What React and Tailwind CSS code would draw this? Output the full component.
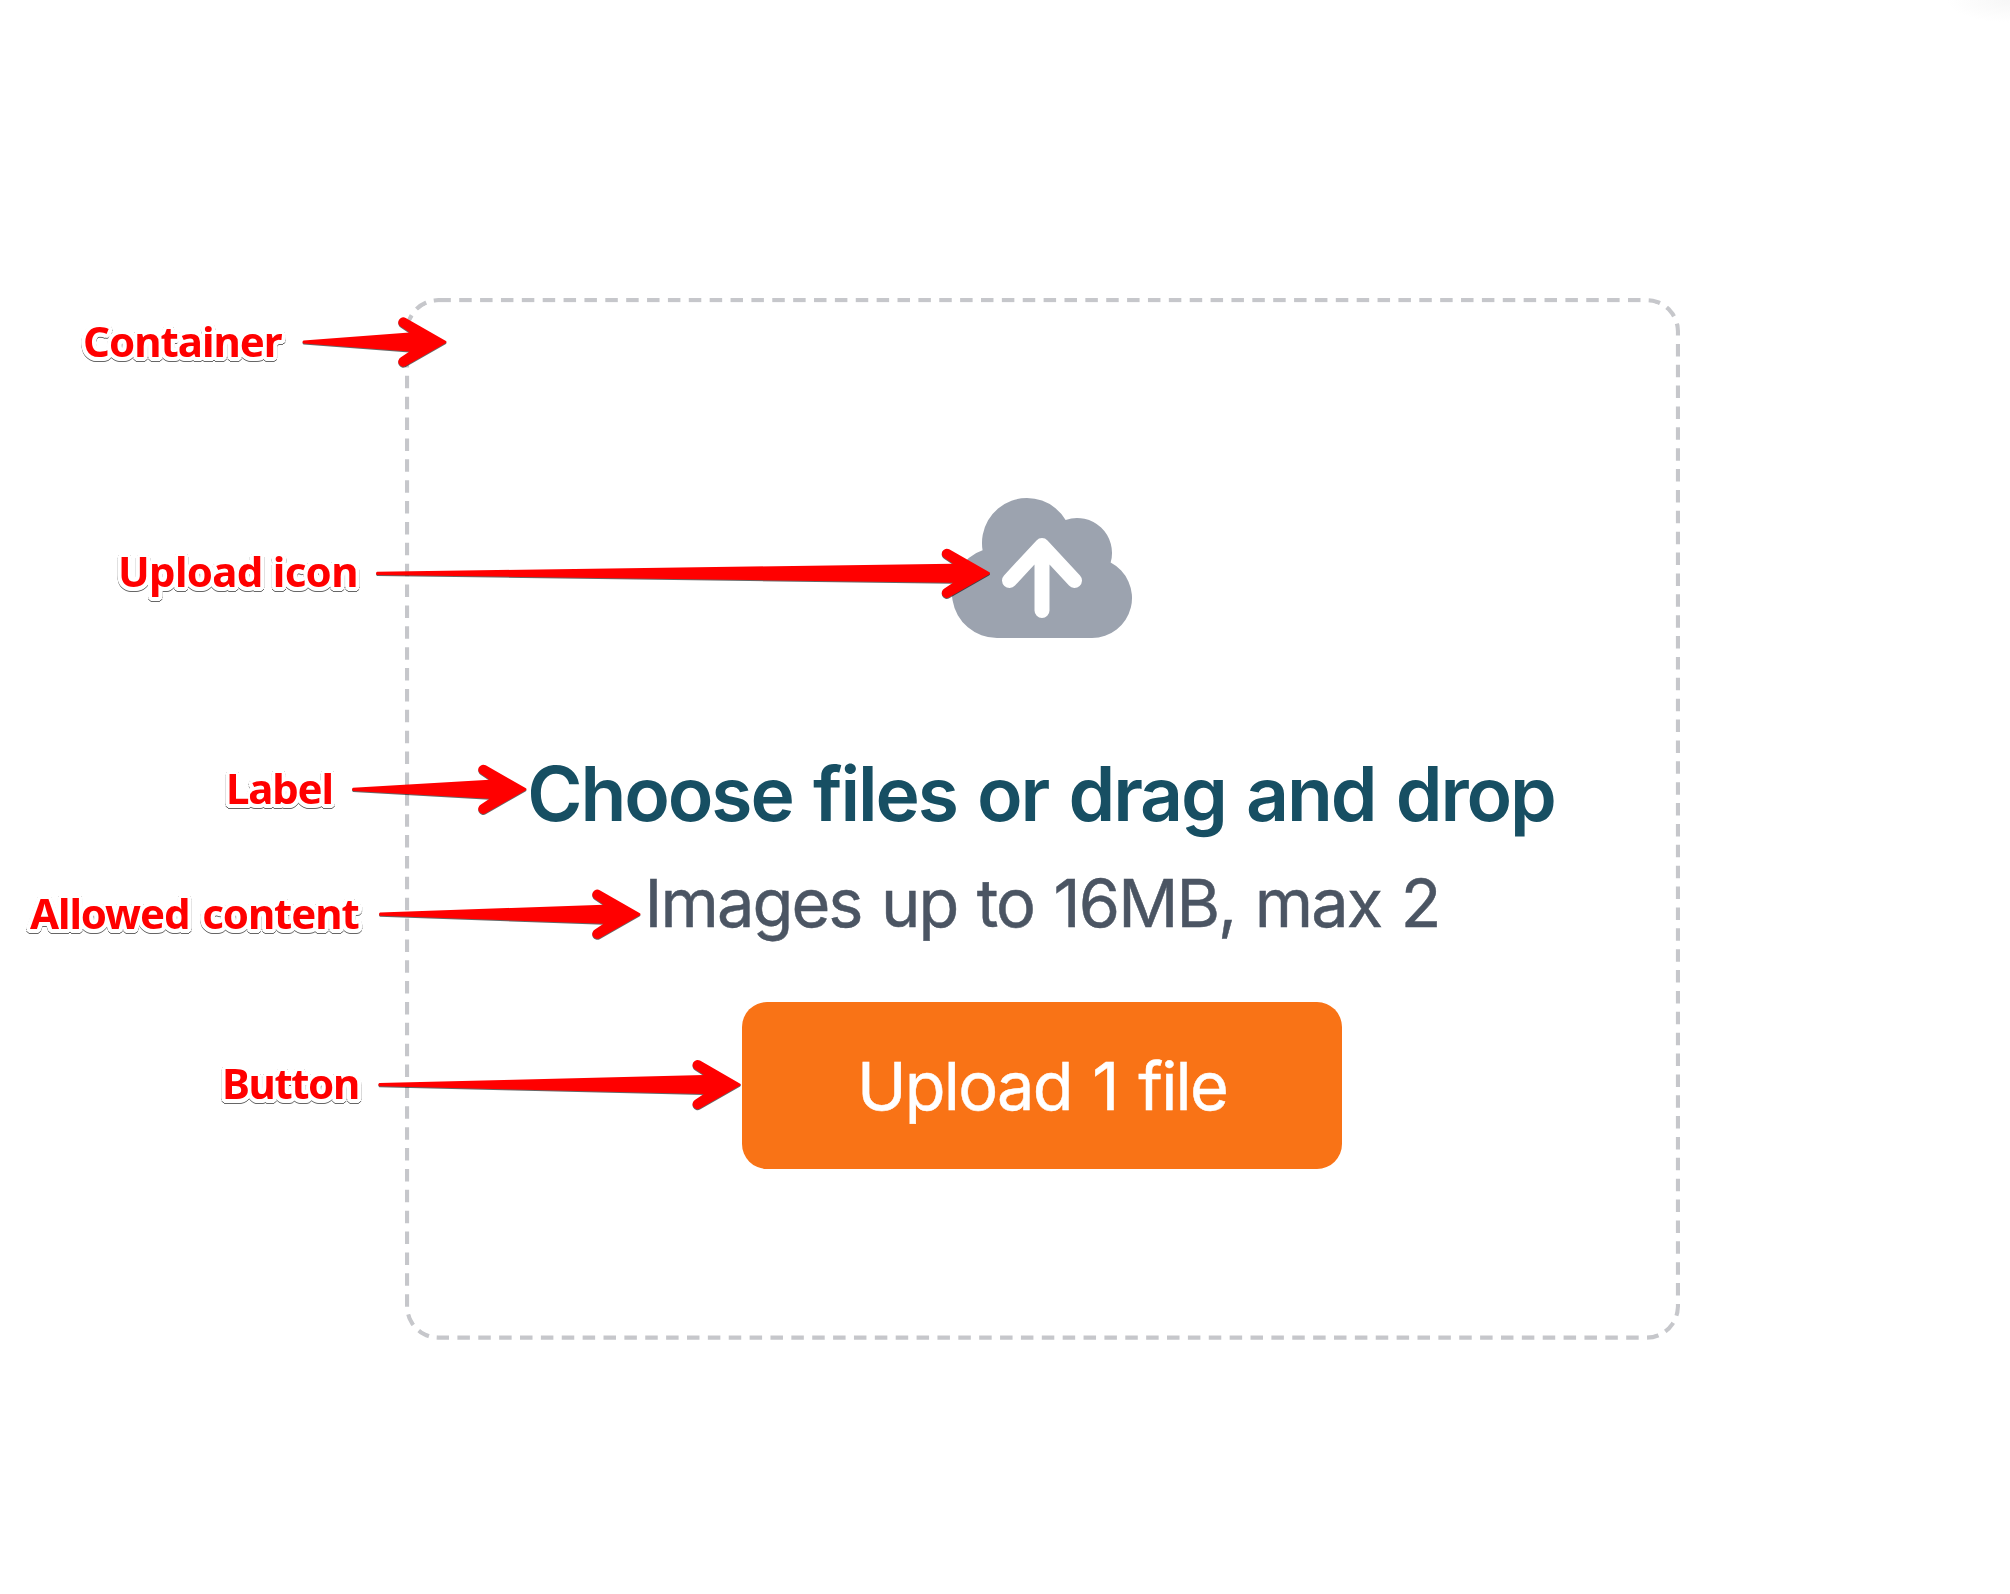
const annotations = [
  { text: "Container", box: "left-[83px] top-[311px] tracking-[-1px]", tail: 302.5, tip: 446.5, y: 342 },
  { text: "Upload icon", box: "left-[118px] top-[541px] tracking-[-0.7px]", tail: 376, tip: 990, y: 573.3 },
  { text: "Label", box: "left-[226px] top-[758px] tracking-[-1.2px]", tail: 352, tip: 526.5, y: 789.3 },
  { text: "Allowed content", box: "left-[30px] top-[883px] tracking-[-1.1px] [word-spacing:3px]", tail: 379, tip: 640.5, y: 914.2 },
  { text: "Button", box: "left-[222px] top-[1053px] tracking-[-1.4px]", tail: 378.3, tip: 740.8, y: 1084.6 },
];

function Arrow({ tail, tip, y }) {
  const len = tip - tail;
  const d = `M${-len + 1} -1.6 L-37 -9.5 L-45.6 -15.2 A5 5 0 0 1 -40.8 -24 L-1 -1.2 Q1 0 -1 1.2 L-40.8 24 A5 5 0 0 1 -45.6 15.2 L-37 9.5 L${-len + 1} 1.6 Q${-len - 1} 0 ${-len + 1} -1.6 Z`;
  return (
    <path
      d={d}
      transform={`translate(${tip} ${y})`}
      fill="#ff0000"
      className="drop-shadow-[0_1px_0.7px_rgba(0,0,0,0.6)]"
    />
  );
}

function CloudUpload() {
  return (
    <svg viewBox="0 0 20 20" className="size-[200px] text-[#9ca3af]">
      <path
        fill="currentColor"
        fillRule="evenodd"
        clipRule="evenodd"
        d="M5.5 17a4.5 4.5 0 0 1-1.44-8.765a4.5 4.5 0 0 1 8.302-3.046a3.5 3.5 0 0 1 4.504 4.272A4 4 0 0 1 15 17H5.5Zm3.75-2.75a.75.75 0 0 0 1.5 0V9.66l1.95 2.1a.75.75 0 1 0 1.1-1.02l-3.25-3.5a.75.75 0 0 0-1.1 0l-3.25 3.5a.75.75 0 1 0 1.1 1.02l1.95-2.1v4.59Z"
      />
    </svg>
  );
}

export default function App() {
  return (
    <div className="relative h-[1594px] w-[2010px] overflow-hidden bg-white pl-[405px] pt-[298px] font-['Inter',sans-serif]">
      <div className="absolute right-0 top-0 h-[23px] w-[64px] bg-[radial-gradient(ellipse_at_top_right,#f7f7f7,#ffffff_70%)]" />

      <section className="relative flex h-[1040px] w-[1274px] flex-col items-center pt-[170px]">
        <div className="pointer-events-none absolute left-0 top-0 h-[249.6px] w-[306px] origin-top-left scale-[4.16667] rounded-lg border border-dashed border-[#c6c7cb]" />
        <CloudUpload />
        <h1 className="mt-[76px] whitespace-nowrap pr-[2px] text-[75px] font-semibold leading-[100px] tracking-[-2.1px] text-[#174f63] [word-spacing:3.4px]">
          Choose files or drag and drop
        </h1>
        <p className="mt-[9px] whitespace-nowrap text-[66.67px] leading-[100px] tracking-[-1.95px] text-[#4b5563] [-webkit-text-stroke:0.5px_#4b5563] [word-spacing:2.7px]">
          Images up to 16MB, max 2
        </p>
        <button className="mt-[49px] h-[167px] w-[600px] whitespace-nowrap rounded-[25px] bg-[#f97316] text-[66.67px] leading-[100px] tracking-[-1.75px] text-white [-webkit-text-stroke:0.5px_white] [word-spacing:3.5px]">
          Upload 1 file
        </button>
      </section>

      <svg className="pointer-events-none absolute left-0 top-0 h-[1594px] w-[2010px]" viewBox="0 0 2010 1594">
        {annotations.map((a) => (
          <Arrow key={a.text} tail={a.tail} tip={a.tip} y={a.y} />
        ))}
      </svg>
      {annotations.map((a) => (
        <span
          key={a.text}
          className={`absolute whitespace-nowrap font-['Noto_Sans',sans-serif] text-[42px] font-bold leading-[60px] text-[#ff0000] [text-shadow:4px_0_#fff,3.7px_1.5px_#fff,2.8px_2.8px_#fff,1.5px_3.7px_#fff,0_4px_#fff,-1.5px_3.7px_#fff,-2.8px_2.8px_#fff,-3.7px_1.5px_#fff,-4px_0_#fff,-3.7px_-1.5px_#fff,-2.8px_-2.8px_#fff,-1.5px_-3.7px_#fff,0_-4px_#fff,1.5px_-3.7px_#fff,2.8px_-2.8px_#fff,3.7px_-1.5px_#fff] drop-shadow-[0_1px_0.7px_rgba(0,0,0,0.6)] ${a.box}`}
        >
          {a.text}
        </span>
      ))}
    </div>
  );
}
